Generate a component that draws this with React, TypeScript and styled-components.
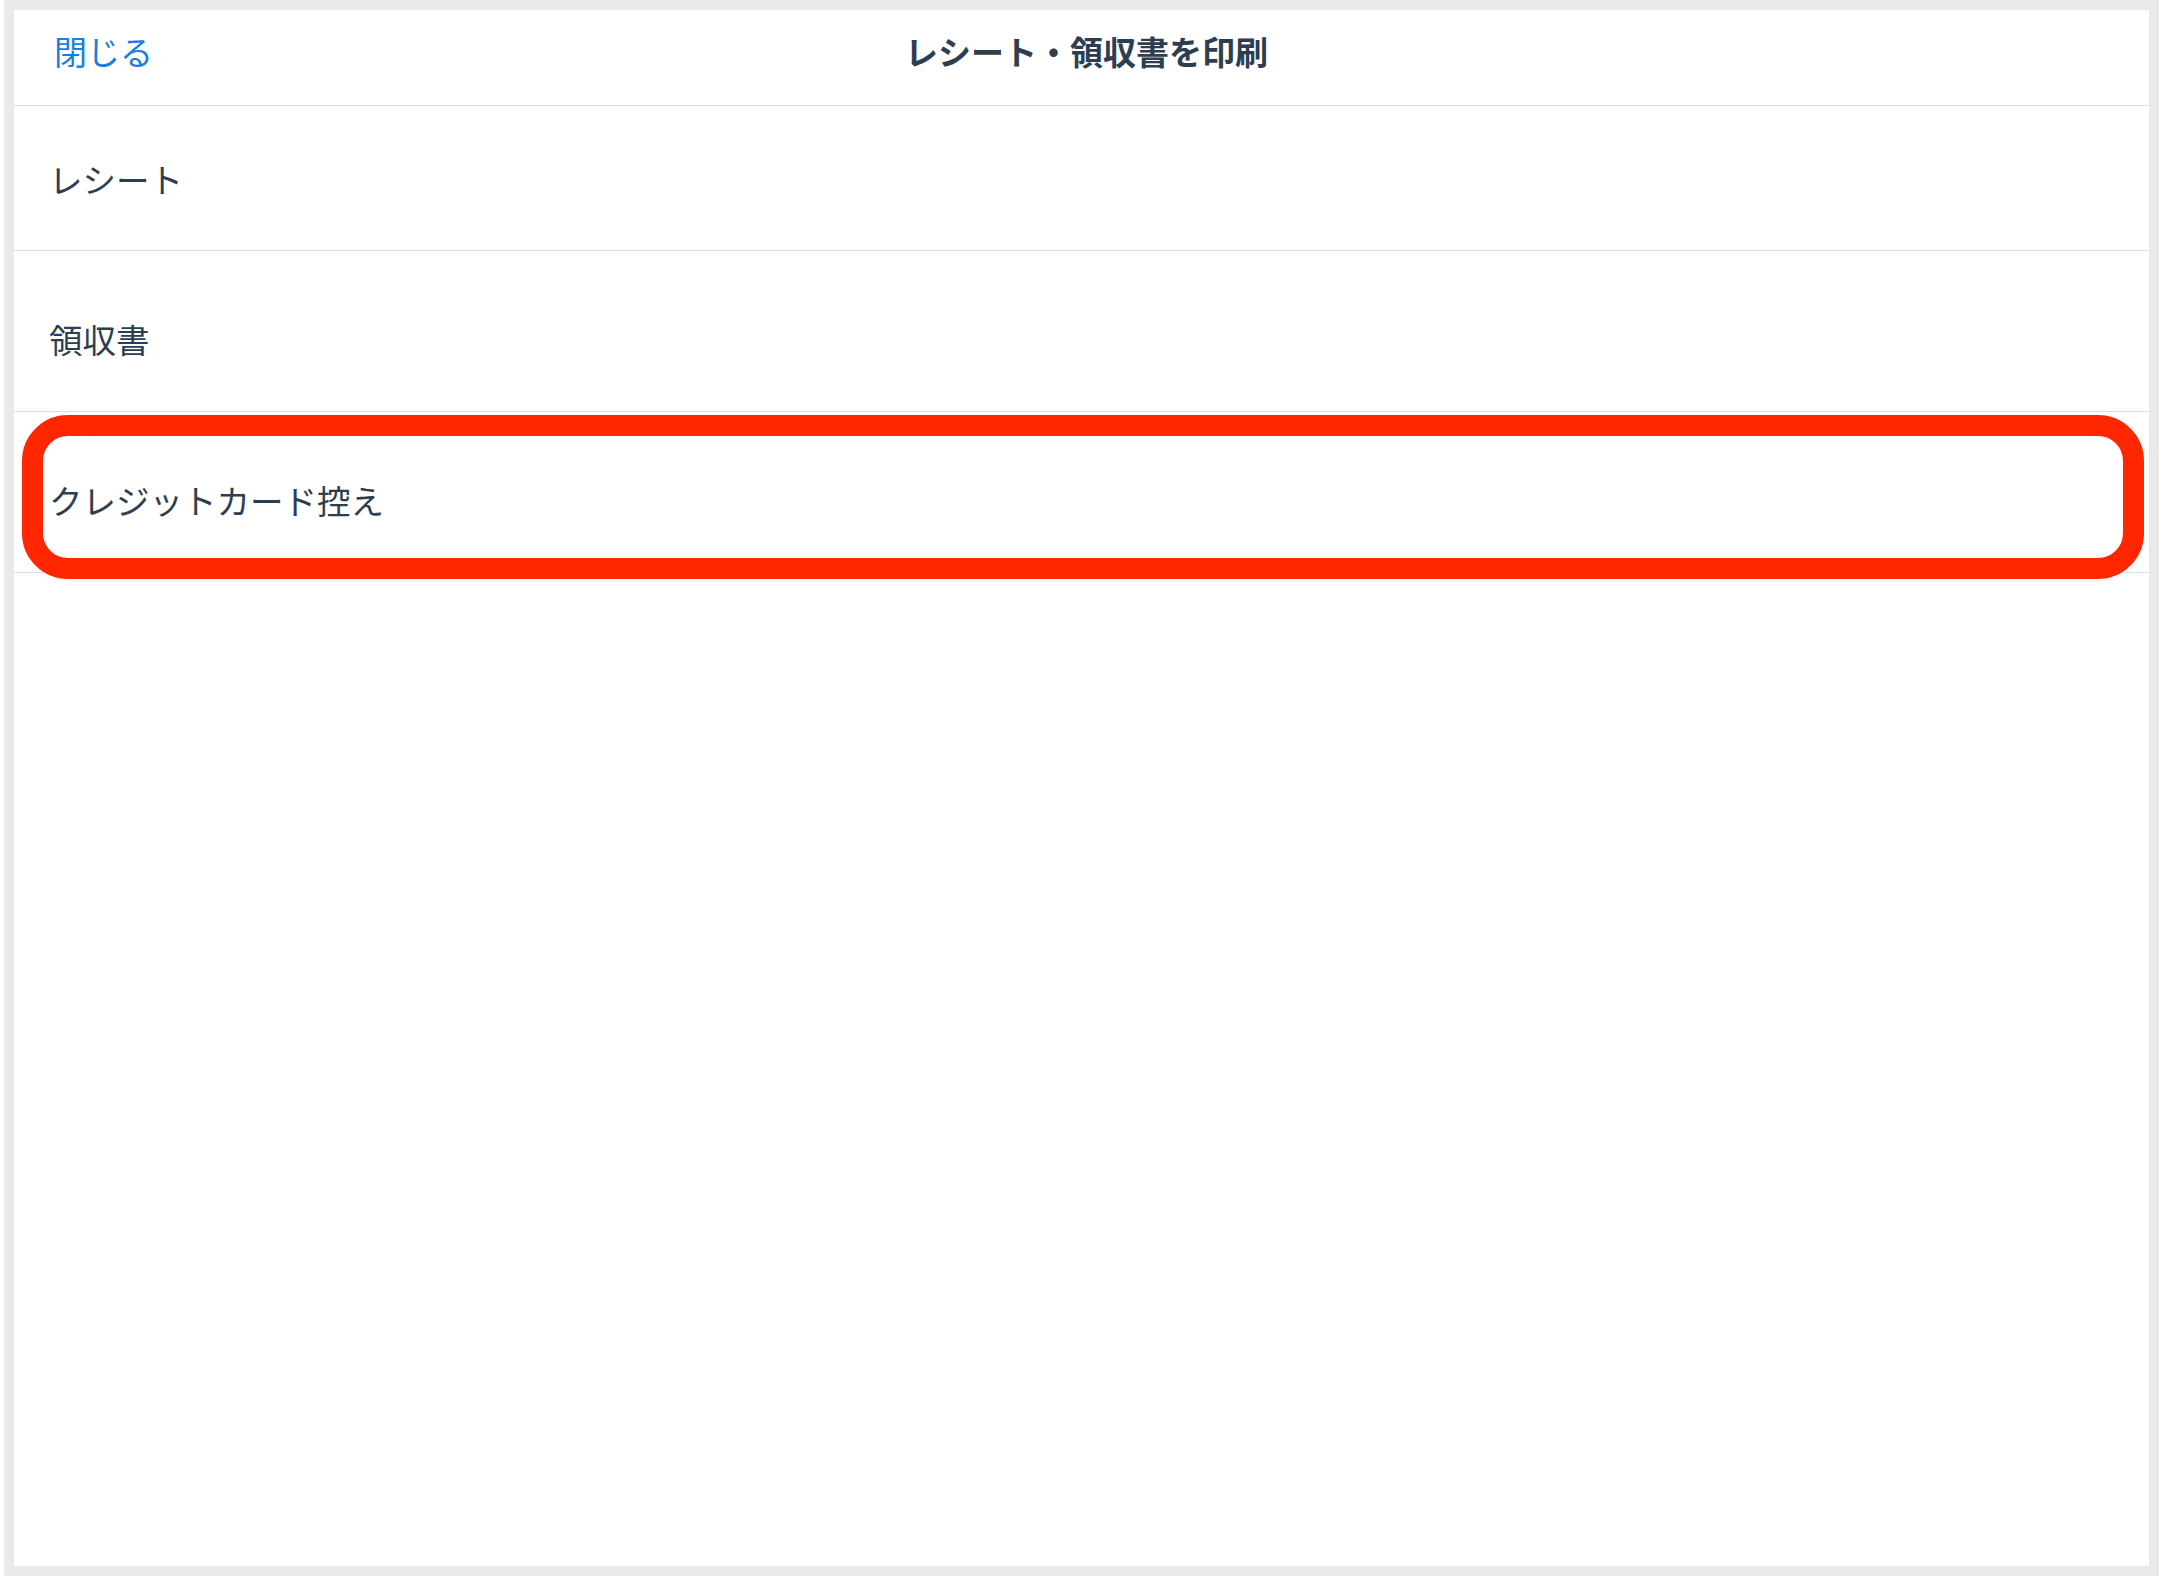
import React from "react";
import styled, { createGlobalStyle } from "styled-components";

const GlobalStyle = createGlobalStyle`
  html, body {
    margin: 0;
    padding: 0;
    background: #ffffff;
  }
  body {
    font-family: "Noto Sans CJK JP", "Noto Sans", sans-serif;
  }
`;

const Page = styled.div`
  width: 2160px;
  height: 1578px;
  padding-left: 4px;
  box-sizing: border-box;
`;

const Frame = styled.div`
  width: 2155px;
  height: 1576px;
  box-sizing: border-box;
  border: 10px solid #e9e9e9;
  background: #ffffff;
  display: flex;
  flex-direction: column;
`;

const Header = styled.div`
  height: 96px;
  box-sizing: border-box;
  border-bottom: 1px solid #d4dfeb;
  display: grid;
  grid-template-columns: 1fr auto 1fr;
  align-items: center;
  padding: 0 40px 14px;
`;

const CloseButton = styled.button`
  justify-self: start;
  background: none;
  border: none;
  padding: 0;
  font-family: "Noto Sans CJK JP", sans-serif;
  font-size: 33px;
  color: #1a7ddf;
  cursor: pointer;
`;

const Title = styled.h1`
  margin: 0;
  font-size: 33px;
  font-weight: 700;
  color: #2c3e50;
  padding-left: 10px;
`;

const List = styled.div`
  display: flex;
  flex-direction: column;
`;

const Row = styled.div<{ h: number; offset: number }>`
  position: relative;
  height: ${({ h }) => h}px;
  box-sizing: border-box;
  border-bottom: 1px solid #d4dfeb;
  display: flex;
  align-items: center;
  padding: ${({ offset }) => offset}px 0 0 35px;
  font-size: 33.5px;
  color: #2c3e50;
  cursor: pointer;
`;

const Highlight = styled.div`
  position: absolute;
  left: 8px;
  right: 5px;
  top: 3px;
  bottom: -7px;
  border: 21px solid #ff2600;
  border-radius: 46px;
  pointer-events: none;
`;

const rows = [
  { label: "レシート", h: 145, offset: 0 },
  { label: "領収書", h: 161, offset: 14 },
  { label: "クレジットカード控え", h: 161, offset: 14, marked: true },
];

export default function App() {
  return (
    <Page>
      <GlobalStyle />
      <Frame>
        <Header>
          <CloseButton>閉じる</CloseButton>
          <Title>レシート・領収書を印刷</Title>
          <span />
        </Header>
        <List>
          {rows.map((r) => (
            <Row key={r.label} h={r.h} offset={r.offset}>
              {r.label}
              {r.marked && <Highlight />}
            </Row>
          ))}
        </List>
      </Frame>
    </Page>
  );
}
